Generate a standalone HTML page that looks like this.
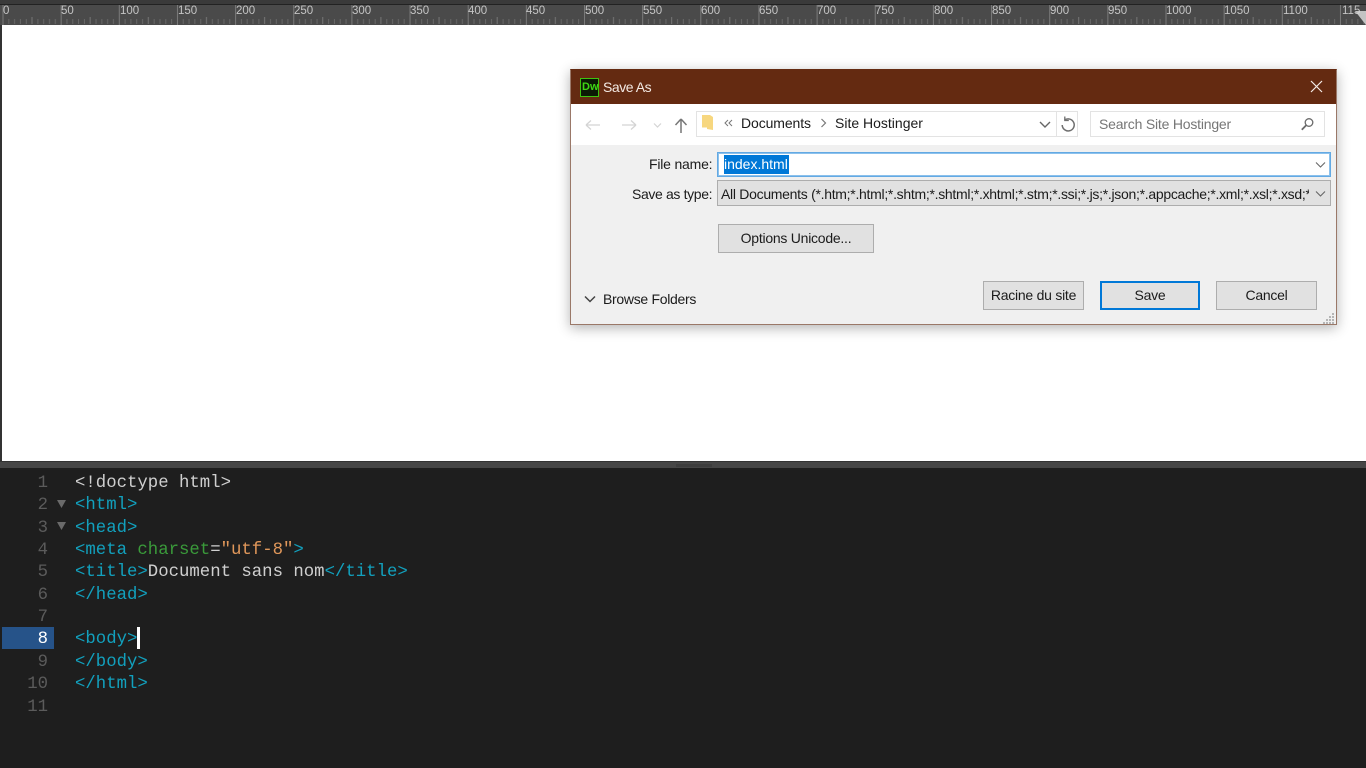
<!DOCTYPE html>
<html><head><meta charset="utf-8"><title>Save As</title>
<style>
html,body{margin:0;padding:0;width:1366px;height:768px;overflow:hidden;background:#fff}
*{box-sizing:border-box}
.a{position:absolute}
.t{position:absolute;font-family:"Liberation Sans",sans-serif;font-size:14px;line-height:18px;color:#1b1b1b;white-space:nowrap}
.r{position:absolute;top:5px;font-family:"Liberation Sans",sans-serif;font-size:11.500px;line-height:13px;color:#c4c4c4}
.btn{position:absolute;background:#e1e1e1;border:1px solid #adadad;text-align:center;font-family:"Liberation Sans",sans-serif;font-size:14px;letter-spacing:-.25px;color:#1b1b1b;white-space:nowrap}
.c{position:absolute;left:75px;font-family:"Liberation Mono","DejaVu Sans Mono",monospace;font-size:17.33px;line-height:22px;white-space:pre;color:#12a0bd}
.n{position:absolute;width:48px;text-align:right;left:0;font-family:"Liberation Mono","DejaVu Sans Mono",monospace;font-size:17.33px;line-height:22px;color:#5b5b5b}
.w{color:#cfcfcf}.g{color:#3a9a3a}.o{color:#e0975a}
</style></head><body>
<div class="a" style="left:0;top:0;width:1366px;height:4px;background:#3a3a3a"></div>
<div class="a" style="left:0;top:4px;width:1366px;height:1px;background:#222"></div>
<div class="a" style="left:0;top:5px;width:1366px;height:20px;background:#4a4a4a"></div>
<div class="a" style="left:0;top:25px;width:2px;height:436px;background:#333"></div>
<svg class="a" style="left:0;top:5px" width="1366" height="20">
<defs><pattern id="p" x="2.5" y="0" width="58.15" height="20" patternUnits="userSpaceOnUse">
<rect x="0" y="0" width="1" height="20" fill="#7a7a7a"/>
<rect x="5.8" y="14" width="1" height="5" fill="#686868"/>
<rect x="11.6" y="14" width="1" height="5" fill="#686868"/>
<rect x="17.4" y="14" width="1" height="5" fill="#686868"/>
<rect x="23.3" y="14" width="1" height="5" fill="#686868"/>
<rect x="29" y="12" width="1" height="7" fill="#767676"/>
<rect x="34.9" y="14" width="1" height="5" fill="#686868"/>
<rect x="40.7" y="14" width="1" height="5" fill="#686868"/>
<rect x="46.5" y="14" width="1" height="5" fill="#686868"/>
<rect x="52.3" y="14" width="1" height="5" fill="#686868"/>
</pattern></defs>
<rect width="1366" height="20" fill="url(#p)"/>
</svg>
<div class="r" style="left:3px">0</div>
<div class="r" style="left:61px">50</div>
<div class="r" style="left:120px">100</div>
<div class="r" style="left:178px">150</div>
<div class="r" style="left:236px">200</div>
<div class="r" style="left:294px">250</div>
<div class="r" style="left:352px">300</div>
<div class="r" style="left:410px">350</div>
<div class="r" style="left:468px">400</div>
<div class="r" style="left:526px">450</div>
<div class="r" style="left:585px">500</div>
<div class="r" style="left:643px">550</div>
<div class="r" style="left:701px">600</div>
<div class="r" style="left:759px">650</div>
<div class="r" style="left:817px">700</div>
<div class="r" style="left:875px">750</div>
<div class="r" style="left:934px">800</div>
<div class="r" style="left:992px">850</div>
<div class="r" style="left:1050px">900</div>
<div class="r" style="left:1108px">950</div>
<div class="r" style="left:1166px">1000</div>
<div class="r" style="left:1224px">1050</div>
<div class="r" style="left:1283px">1100</div>
<div class="r" style="left:1342px;width:18px;overflow:hidden;white-space:nowrap">1150</div>
<svg class="a" style="left:1354px;top:5px" width="12" height="20"><path d="M1 6H12V20Z" fill="#d8d8d8" opacity=".85"/></svg>

<!-- editor -->
<div class="a" style="left:0;top:461px;width:1366px;height:307px;background:#1e1e1e"></div>
<div class="a" style="left:0;top:461px;width:1366px;height:1px;background:#333"></div>
<div class="a" style="left:0;top:462px;width:1366px;height:6px;background:#464646"></div>
<div class="a" style="left:676px;top:464px;width:36px;height:3px;background:#3d3d3d"></div>
<div class="a" style="left:2px;top:627px;width:52px;height:22px;background:#265389"></div>
<div class="n" style="top:473px">1</div>
<div class="n" style="top:495px">2</div>
<div class="n" style="top:518px">3</div>
<div class="n" style="top:540px">4</div>
<div class="n" style="top:562px">5</div>
<div class="n" style="top:585px">6</div>
<div class="n" style="top:607px">7</div>
<div class="n" style="top:629px;color:#fff">8</div>
<div class="n" style="top:652px">9</div>
<div class="n" style="top:674px">10</div>
<div class="n" style="top:697px">11</div>
<svg class="a" style="left:56px;top:499px" width="11" height="10"><path d="M1 1H10L5.5 9Z" fill="#6a6a6a"/></svg>
<svg class="a" style="left:56px;top:521px" width="11" height="10"><path d="M1 1H10L5.5 9Z" fill="#6a6a6a"/></svg>
<div class="c w" style="top:473px">&lt;!doctype html&gt;</div>
<div class="c" style="top:495px">&lt;html&gt;</div>
<div class="c" style="top:518px">&lt;head&gt;</div>
<div class="c" style="top:540px">&lt;meta <span class="g">charset</span><span class="w">=</span><span class="o">"utf-8"</span>&gt;</div>
<div class="c" style="top:562px">&lt;title&gt;<span class="w">Document sans nom</span>&lt;/title&gt;</div>
<div class="c" style="top:585px">&lt;/head&gt;</div>
<div class="c" style="top:629px">&lt;body&gt;</div>
<div class="a" style="left:137px;top:627px;width:3px;height:22px;background:#fff"></div>
<div class="c" style="top:652px">&lt;/body&gt;</div>
<div class="c" style="top:674px">&lt;/html&gt;</div>

<!-- dialog -->
<div class="a" style="left:570px;top:69px;width:767px;height:256px;background:#f0f0f0;border:1px solid #9a7868;border-top-color:#642a11;box-shadow:0 3px 12px rgba(0,0,0,.3)"></div>
<div class="a" style="left:571px;top:70px;width:765px;height:34px;background:#642a11"></div>
<div class="a" style="left:580px;top:78px;width:19px;height:19px;background:#0b1a05;border:1.5px solid #3fc310"></div>
<div class="t" style="left:582px;top:80px;font-size:11px;line-height:15px;font-weight:bold;color:#3fd614">Dw</div>
<div class="t" style="left:603px;top:78px;color:#f3e9e3;letter-spacing:-.45px">Save As</div>
<svg class="a" style="left:1310px;top:80px" width="13" height="13"><path d="M1 1L12 12M12 1L1 12" stroke="#f5ece8" stroke-width="1.2" fill="none"/></svg>
<div class="a" style="left:571px;top:104px;width:765px;height:41px;background:#fff"></div>
<svg class="a" style="left:584px;top:116px" width="110" height="18" fill="none">
<path d="M2 9H16M2 9L7 4.5M2 9L7 13.5" stroke="#d4d4d4" stroke-width="1.3"/>
<path d="M38 9H52M52 9L47 4.5M52 9L47 13.5" stroke="#d4d4d4" stroke-width="1.3"/>
<path d="M70 7.5L73.5 11L77 7.5" stroke="#d4d4d4" stroke-width="1.2"/>
<path d="M97 17V3M97 3L91.5 9M97 3L102.5 9" stroke="#777" stroke-width="1.5"/>
</svg>
<div class="a" style="left:696px;top:111px;width:382px;height:26px;background:#fff;border:1px solid #e3e3e3"></div>
<div class="a" style="left:1056px;top:112px;width:1px;height:24px;background:#e3e3e3"></div>
<svg class="a" style="left:700px;top:114px" width="16" height="18"><path d="M2 1H10L13 3V16L7 15V13.500H2Z" fill="#f7d77f"/></svg>
<svg class="a" style="left:724px;top:119px" width="9" height="8" fill="none"><path d="M4 1L1 4L4 7M8 1L5 4L8 7" stroke="#777" stroke-width="1"/></svg>
<div class="t" style="left:741px;top:114px;letter-spacing:-.1px">Documents</div>
<svg class="a" style="left:820px;top:118px" width="7" height="10" fill="none"><path d="M1.500 1L5.500 5L1.500 9" stroke="#777" stroke-width="1.2"/></svg>
<div class="t" style="left:835px;top:114px">Site Hostinger</div>
<svg class="a" style="left:1039px;top:120px" width="12" height="9" fill="none"><path d="M1 2L6 7L11 2" stroke="#666" stroke-width="1.4"/></svg>
<svg class="a" style="left:1060px;top:116px" width="16" height="17" fill="none"><path d="M4.500 4.200A6 6 0 1 1 2.200 9" stroke="#6f6f6f" stroke-width="1.500"/><path d="M4.800 0.500V4.500H8.800" stroke="#6f6f6f" stroke-width="1.300"/></svg>
<div class="a" style="left:1090px;top:111px;width:235px;height:26px;background:#fff;border:1px solid #e3e3e3"></div>
<div class="t" style="left:1099px;top:115px;color:#767676;letter-spacing:-.2px">Search Site Hostinger</div>
<svg class="a" style="left:1300px;top:117px" width="15" height="15" fill="none"><circle cx="9" cy="5.500" r="3.800" stroke="#6a6a6a" stroke-width="1.300"/><path d="M6.200 8.300L1.800 12.700" stroke="#6a6a6a" stroke-width="1.800"/></svg>

<div class="t" style="left:649px;top:155px;letter-spacing:-.2px">File name:</div>
<div class="a" style="left:717px;top:152px;width:614px;height:25px;background:#fff;border:1px solid #63a9e3;box-shadow:inset 0 0 0 1px #8cc1ec"></div>
<div class="a" style="left:724px;top:155px;width:65px;height:19px;background:#0078d7"></div>
<div class="t" style="left:724px;top:155px;color:#fff">index.html</div>
<svg class="a" style="left:1315px;top:161px" width="11" height="8" fill="none"><path d="M1 1.500L5.500 6L10 1.500" stroke="#666" stroke-width="1.100"/></svg>
<div class="t" style="left:632px;top:185px;letter-spacing:-.36px">Save as type:</div>
<div class="a" style="left:717px;top:180px;width:614px;height:26px;background:#e1e1e1;border:1px solid #adadad"></div>
<div class="t" style="left:721px;top:185px;width:588px;overflow:hidden;letter-spacing:-.29px">All Documents (*.htm;*.html;*.shtm;*.shtml;*.xhtml;*.stm;*.ssi;*.js;*.json;*.appcache;*.xml;*.xsl;*.xsd;*.dtd</div>
<svg class="a" style="left:1315px;top:190px" width="11" height="8" fill="none"><path d="M1 1.500L5.500 6L10 1.500" stroke="#666" stroke-width="1.100"/></svg>

<div class="btn" style="left:718px;top:224px;width:156px;height:29px;line-height:26px">Options Unicode...</div>
<svg class="a" style="left:584px;top:295px" width="12" height="9" fill="none"><path d="M1 1.500L6 6.500L11 1.500" stroke="#444" stroke-width="1.500"/></svg>
<div class="t" style="left:603px;top:290px;letter-spacing:-.3px">Browse Folders</div>
<div class="btn" style="left:983px;top:281px;width:101px;height:29px;line-height:26px">Racine du site</div>
<div class="btn" style="left:1100px;top:281px;width:100px;height:29px;line-height:25px;border:2px solid #0078d7">Save</div>
<div class="btn" style="left:1216px;top:281px;width:101px;height:29px;line-height:26px">Cancel</div>
<svg class="a" style="left:1323px;top:312px" width="12" height="12" fill="#b5b5b5"><rect x="9" y="1" width="2" height="2"/><rect x="6" y="4" width="2" height="2"/><rect x="9" y="4" width="2" height="2"/><rect x="3" y="7" width="2" height="2"/><rect x="6" y="7" width="2" height="2"/><rect x="9" y="7" width="2" height="2"/><rect x="0" y="10" width="2" height="2"/><rect x="3" y="10" width="2" height="2"/><rect x="6" y="10" width="2" height="2"/><rect x="9" y="10" width="2" height="2"/></svg>
</body></html>
